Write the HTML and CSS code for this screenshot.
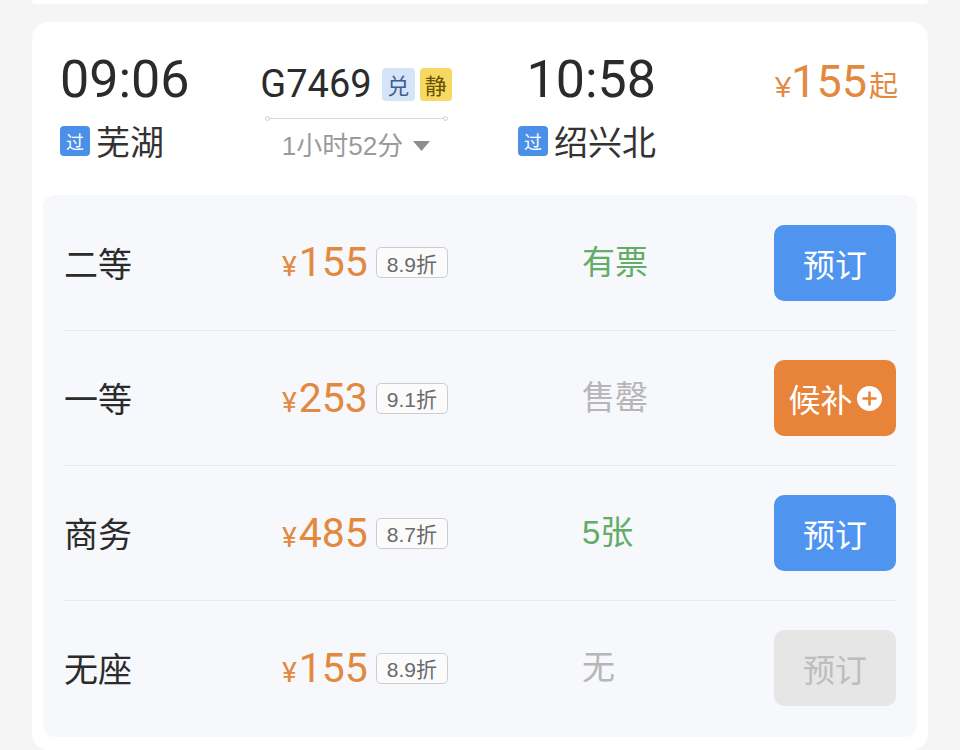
FILE: index.html
```html
<!DOCTYPE html>
<html lang="zh-CN">
<head>
<meta charset="utf-8">
<title>车次详情</title>
<link rel="stylesheet" href="styles.css">
</head>
<body>
<div class="prev-card"></div>
<div class="card">
  <div class="header">
    <div class="time">09:06</div>
    <div class="train">
      <span class="train-no">G7469</span>
      <span class="tag tag-dui">兑</span>
      <span class="tag tag-jing">静</span>
    </div>
    <div class="time time-end">10:58</div>
    <div class="from-price"><span class="yen">¥</span><span class="num">155</span><span class="qi">起</span></div>

    <div class="station"><span class="pass">过</span><span class="st-name">芜湖</span></div>
    <div class="mid">
      <div class="line"></div>
      <div class="duration"><span>1小时52分</span><svg class="caret" width="17" height="10" viewBox="0 0 17 10"><path d="M0 0H17L8.5 10Z" fill="#8e8e8e"/></svg></div>
    </div>
    <div class="station station-end"><span class="pass">过</span><span class="st-name">绍兴北</span></div>
  </div>

  <div class="panel">
    <div class="row">
      <div class="seat">二等</div>
      <div class="price"><span class="amount"><span class="yen">¥</span>155</span><span class="disc">8.9折</span></div>
      <div class="status ok">有票</div>
      <div class="btn btn-blue">预订</div>
    </div>
    <div class="row">
      <div class="seat">一等</div>
      <div class="price"><span class="amount"><span class="yen">¥</span>253</span><span class="disc">9.1折</span></div>
      <div class="status off">售罄</div>
      <div class="btn btn-orange">候补<svg class="plus" width="25" height="25" viewBox="0 0 25 25"><circle cx="12.5" cy="12.5" r="12.5" fill="#fff"/><path d="M12.5 6.5V18.5M6.5 12.5H18.5" stroke="#e8843a" stroke-width="2.6" stroke-linecap="round"/></svg></div>
    </div>
    <div class="row">
      <div class="seat">商务</div>
      <div class="price"><span class="amount"><span class="yen">¥</span>485</span><span class="disc">8.7折</span></div>
      <div class="status ok">5张</div>
      <div class="btn btn-blue">预订</div>
    </div>
    <div class="row">
      <div class="seat">无座</div>
      <div class="price"><span class="amount"><span class="yen">¥</span>155</span><span class="disc">8.9折</span></div>
      <div class="status off">无</div>
      <div class="btn btn-disabled">预订</div>
    </div>
  </div>
</div>
</body>
</html>
```

FILE: styles.css
```css
html, body {
  margin: 0;
  padding: 0;
  overflow: hidden;
}
body {
  background: #f5f5f6;
  font-family: "Liberation Sans", "Noto Sans CJK SC", sans-serif;
  color: #333;
}
.prev-card {
  height: 4px;
  margin: 0 32px;
  background: #fff;
  border-radius: 0 0 12px 12px;
}
.card {
  margin: 18px 32px 0;
  background: #fff;
  border-radius: 16px;
  padding: 0 11px 13px;
}
.header {
  display: grid;
  grid-template-columns: 190px 212px 194px 1fr;
  grid-template-rows: 52px auto;
  align-items: baseline;
  padding: 32px 19px 34px 17px;
}
.time {
  font-family: Roboto, "Liberation Sans", sans-serif;
  font-size: 52px;
  line-height: 52px;
  color: #2b2b2b;
}
.time-end {
  justify-self: end;
}
.train {
  display: flex;
  align-items: center;
  justify-content: center;
}
.train-no {
  font-family: Roboto, "Liberation Sans", sans-serif;
  font-size: 38px;
  line-height: 40px;
  color: #2b2b2b;
}
.tag {
  display: flex;
  align-items: center;
  justify-content: center;
  width: 33px;
  height: 33px;
  border-radius: 4px;
  font-family: "Noto Sans CJK SC", sans-serif;
  font-size: 22px;
  line-height: 1;
}
.tag-dui {
  margin-left: 10px;
  background: #d6e4f8;
  color: #3b5f93;
}
.tag-jing {
  margin-left: 5px;
  width: 32px;
  background: #f6d862;
  color: #6b5200;
}
.from-price {
  justify-self: end;
  color: #e2893f;
  line-height: 40px;
}
.from-price .yen {
  font-size: 29px;
}
.from-price .num {
  font-family: Roboto, "Liberation Sans", sans-serif;
  font-size: 45px;
}
.from-price .qi {
  font-family: "Noto Sans CJK SC", sans-serif;
  font-size: 29px;
  margin-left: 2px;
}
.station {
  align-self: start;
  display: flex;
  align-items: center;
  height: 40px;
  margin-top: 15px;
}
.station-end {
  justify-self: end;
}
.pass {
  display: flex;
  align-items: center;
  justify-content: center;
  width: 30px;
  height: 30px;
  border-radius: 4px;
  background: #4a90e8;
  color: #fff;
  font-family: "Noto Sans CJK SC", sans-serif;
  font-size: 18px;
  line-height: 1;
}
.st-name {
  margin-left: 6px;
  font-family: "Noto Sans CJK SC", sans-serif;
  font-size: 34px;
  line-height: 40px;
  color: #333;
}
.mid {
  align-self: start;
  display: flex;
  flex-direction: column;
  align-items: center;
}
.line {
  position: relative;
  width: 179px;
  height: 1px;
  margin-top: 12px;
  background: #d6d6d6;
}
.line::before,
.line::after {
  content: "";
  position: absolute;
  top: -2px;
  width: 3px;
  height: 3px;
  border: 1px solid #d0d0d0;
  border-radius: 50%;
  background: #fff;
}
.line::before { left: -2px; }
.line::after { right: -2px; }
.duration {
  display: flex;
  align-items: center;
  margin-top: 12px;
  height: 30px;
  font-size: 26px;
  line-height: 30px;
  color: #9a9a9a;
}
.caret {
  margin-left: 10px;
}
.panel {
  background: #f6f8fb;
  border-radius: 12px;
  padding: 0 21px 2px;
}
.row {
  display: grid;
  grid-template-columns: 218px 300px 1fr 122px;
  align-items: center;
  height: 135px;
  box-sizing: border-box;
}
.row + .row {
  border-top: 1px solid #e8eaee;
}
.seat {
  font-family: "Noto Sans CJK SC", sans-serif;
  font-size: 34px;
  line-height: 40px;
  color: #2b2b2b;
}
.price {
  display: flex;
  align-items: center;
}
.amount {
  margin-top: 4px;
  font-family: Roboto, "Liberation Sans", sans-serif;
  font-size: 41px;
  line-height: 40px;
  color: #e2893f;
}
.amount .yen {
  font-size: 28px;
  margin-right: 2px;
}
.disc {
  display: flex;
  align-items: center;
  height: 29px;
  margin-left: 8px;
  padding: 0 10px;
  border: 1px solid #cdcdcd;
  border-radius: 5px;
  background: #fbfbfc;
  font-size: 21px;
  color: #6a6a6a;
}
.status {
  font-family: "Liberation Sans", "Noto Sans CJK SC", sans-serif;
  font-size: 33px;
  line-height: 40px;
}
.status.ok { color: #62ad67; }
.status.off { color: #b6b6b6; }
.btn {
  display: flex;
  align-items: center;
  justify-content: center;
  height: 76px;
  border-radius: 10px;
  font-family: "Noto Sans CJK SC", sans-serif;
  font-size: 32px;
  color: #fff;
}
.btn-blue { background: #4f94ef; }
.btn-orange { background: #e8843a; }
.btn-disabled { background: #e6e6e6; color: #bdbdbd; }
.plus { margin-left: 4px; }
```
